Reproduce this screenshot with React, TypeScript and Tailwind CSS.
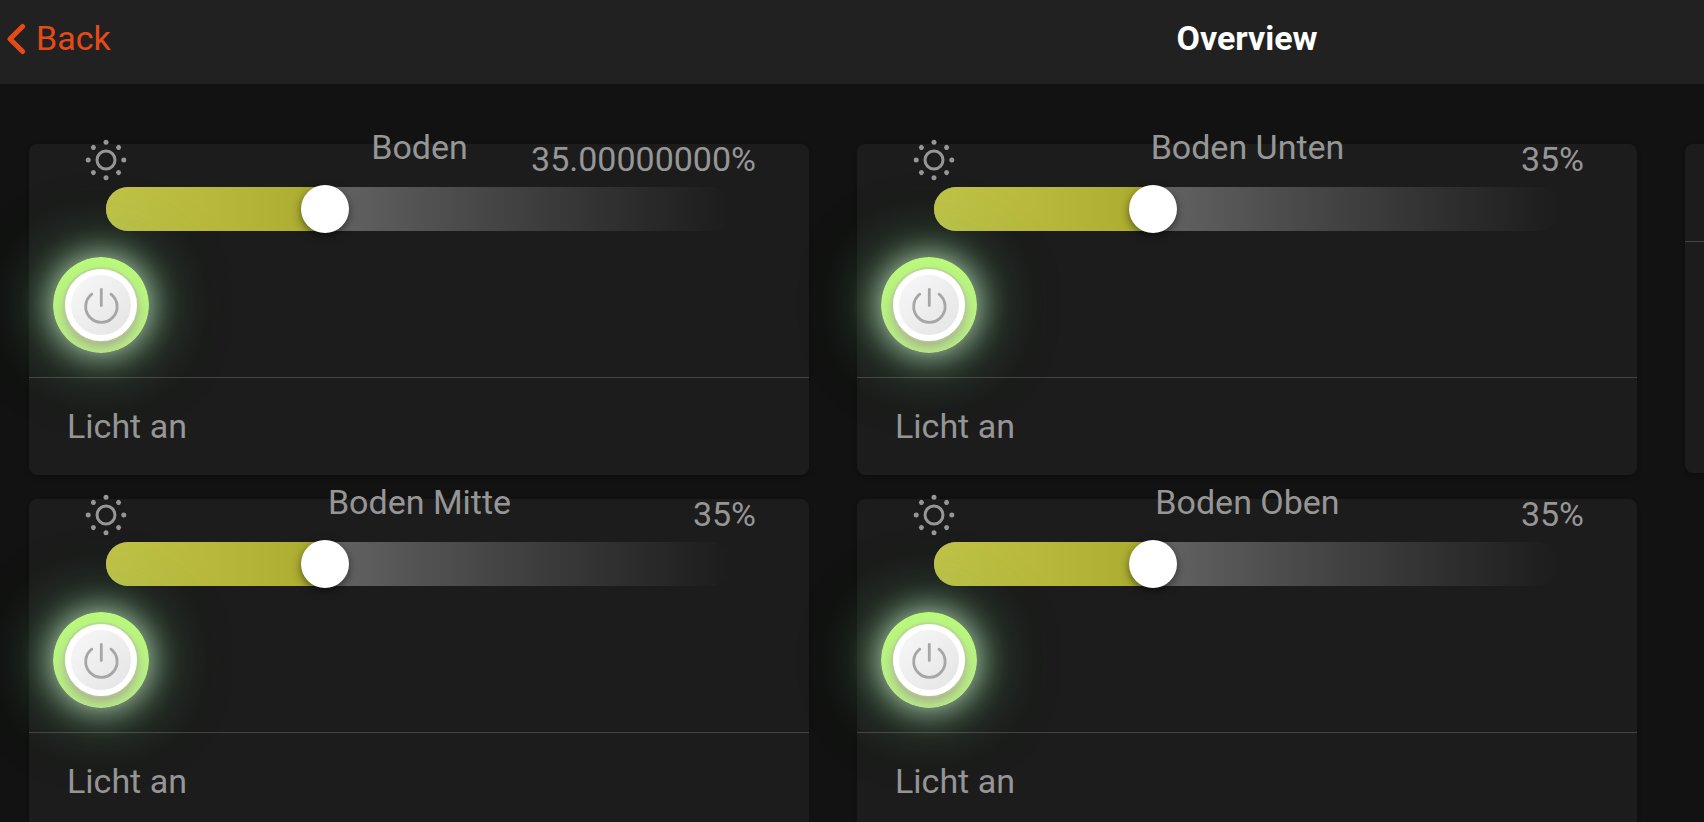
import { useState } from "react";

type Light = { name: string; level: number; decimals: number };

const columns: Light[][] = [
  [
    { name: "Boden", level: 35, decimals: 8 },
    { name: "Boden Mitte", level: 35, decimals: 0 },
  ],
  [
    { name: "Boden Unten", level: 35, decimals: 0 },
    { name: "Boden Oben", level: 35, decimals: 0 },
  ],
];

const cardClass =
  "rounded-lg bg-[#1c1c1c] shadow-[0_2px_4px_rgba(0,0,0,0.25)]";

function SunIcon() {
  const rays = [0, 45, 90, 135, 180, 225, 270, 315];
  return (
    <svg
      viewBox="-23 -23 46 46"
      aria-hidden="true"
      className="mt-[10px] size-[46px] text-[#969696]"
    >
      <circle r="9" fill="none" stroke="currentColor" strokeWidth="3" />
      {rays.map((angle) => (
        <circle
          key={angle}
          cy="-17.8"
          r="2.5"
          fill="currentColor"
          transform={`rotate(${angle})`}
        />
      ))}
    </svg>
  );
}

function PowerIcon() {
  return (
    <svg
      viewBox="-20 -20 40 40"
      aria-hidden="true"
      className="size-10"
      fill="none"
      stroke="#a6a6a6"
      strokeWidth="2.8"
      strokeLinecap="round"
    >
      <path d="M0.3 -15.6V0.5" />
      <path d="M-9.2 -10.8A15.7 15.7 0 1 0 10 -10.8" />
    </svg>
  );
}

function LevelSlider({
  name,
  value,
  onChange,
}: {
  name: string;
  value: number;
  onChange: (value: number) => void;
}) {
  return (
    <div className="relative mx-[77px] mt-1 h-11 rounded-full bg-linear-to-r from-[#919191] to-[#1c1c1c]">
      <div
        className="h-full rounded-l-full bg-linear-to-r from-[#c2c447] to-[#abab2f]"
        style={{ width: `${value}%` }}
      />
      <input
        type="range"
        min={0}
        max={100}
        value={value}
        aria-label={`${name} Helligkeit`}
        onChange={(event) => onChange(Number(event.target.value))}
        className="absolute inset-y-0 -left-6 m-0 h-full w-[calc(100%+48px)] cursor-pointer appearance-none bg-transparent outline-none [&::-webkit-slider-thumb]:size-12 [&::-webkit-slider-thumb]:appearance-none [&::-webkit-slider-thumb]:rounded-full [&::-webkit-slider-thumb]:bg-white [&::-webkit-slider-thumb]:shadow-[0_3px_8px_rgba(0,0,0,0.5)]"
      />
    </div>
  );
}

function PowerButton({
  name,
  on,
  onToggle,
}: {
  name: string;
  on: boolean;
  onToggle: () => void;
}) {
  const ring = on
    ? "bg-linear-to-b from-[#baf97c] to-[#b8ef88] shadow-[0_0_30px_rgba(225,245,225,0.7),0_0_60px_rgba(130,215,140,0.65),0_0_90px_rgba(50,120,60,0.3)]"
    : "bg-[#3a3a3a]";
  return (
    <button
      type="button"
      aria-pressed={on}
      aria-label={`${name} schalten`}
      onClick={onToggle}
      className={`relative mt-[26px] ml-6 flex size-24 items-center justify-center rounded-full ${ring}`}
    >
      <span className="flex size-[72px] items-center justify-center rounded-full border-[6px] border-white bg-linear-to-br from-[#f8f8f8] to-[#e4e4e4] shadow-[0_0_0_2px_rgba(185,200,165,0.6),0_6px_12px_rgba(160,140,140,0.7)]">
        <PowerIcon />
      </span>
    </button>
  );
}

function LightCard({ light }: { light: Light }) {
  const [level, setLevel] = useState(light.level);
  const [on, setOn] = useState(true);
  return (
    <section className={cardClass}>
      <div className="flow-root border-b border-[#444444] pb-6">
        <div className="-mt-[17px] grid grid-cols-[1fr_auto_1fr] pr-[53px] pl-[54px]">
          <SunIcon />
          <h2>{light.name}</h2>
          <output className="mt-3 justify-self-end">
            {level.toFixed(light.decimals)}%
          </output>
        </div>
        <LevelSlider name={light.name} value={level} onChange={setLevel} />
        <PowerButton name={light.name} on={on} onToggle={() => setOn(!on)} />
      </div>
      <p className="px-[38px] pt-7 pb-[29px]">{on ? "Licht an" : "Licht aus"}</p>
    </section>
  );
}

export default function App() {
  return (
    <div className="h-screen overflow-auto bg-[#121212] font-[Roboto,sans-serif] text-[34px] leading-10 text-[#969696] [scrollbar-width:none]">
      <div className="w-max min-w-full">
        <header className="grid h-[84px] grid-cols-[1fr_auto_1fr] items-center bg-[#212121] pb-2">
          <a
            href="#back"
            className="flex items-center gap-[10px] justify-self-start pl-[6px] text-[#e64a19]"
          >
            <svg
              viewBox="0 0 20 34"
              aria-hidden="true"
              className="h-[34px] w-5"
              fill="none"
              stroke="currentColor"
              strokeWidth="5"
              strokeLinecap="round"
              strokeLinejoin="round"
            >
              <path d="M16.6 5.4L4 18L16.6 30.6" />
            </svg>
            Back
          </a>
          <h1 className="font-bold text-white">Overview</h1>
        </header>
        <main className="flex items-start gap-12 px-[29px] pt-[60px] pb-6">
          {columns.map((lights) => (
            <div key={lights[0].name} className="flex w-[780px] flex-col gap-6">
              {lights.map((light) => (
                <LightCard key={light.name} light={light} />
              ))}
            </div>
          ))}
          <section className={`w-[780px] ${cardClass}`}>
            <div className="h-[98px] border-b border-[#444444]" />
            <div className="h-[231px]" />
          </section>
        </main>
      </div>
    </div>
  );
}
